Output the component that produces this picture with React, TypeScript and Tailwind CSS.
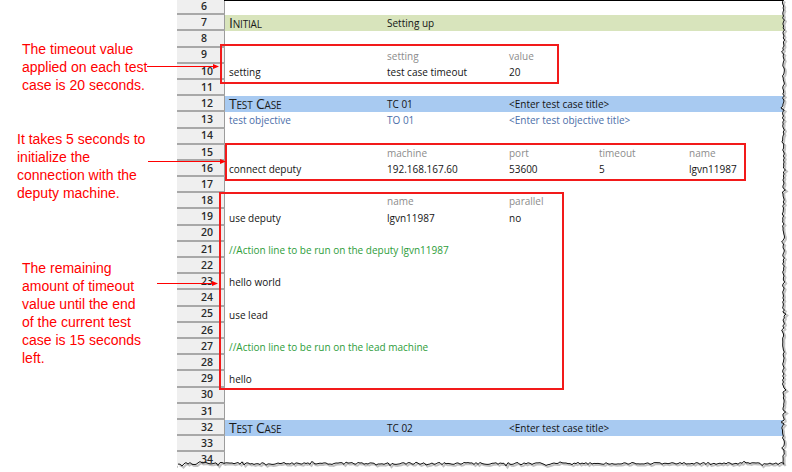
import React from "react";

type CellDef = { t: string; c?: string };
type RowDef = {
  n: number;
  band?: "green" | "blue";
  cells?: (CellDef | null)[];
  title?: string;
};

const G = "text-[#8c8c8c]";
const B = "text-[#4b6ea9]";
const GR = "text-[#2e9d3a]";

const rows: RowDef[] = [
  { n: 6 },
  { n: 7, band: "green", title: "Initial", cells: [null, { t: "Setting up" }] },
  { n: 8 },
  { n: 9, cells: [null, { t: "setting", c: G }, { t: "value", c: G }] },
  { n: 10, cells: [{ t: "setting" }, { t: "test case timeout" }, { t: "20" }] },
  { n: 11 },
  { n: 12, band: "blue", title: "Test Case", cells: [null, { t: "TC 01" }, { t: "<Enter test case title>" }] },
  { n: 13, cells: [{ t: "test objective", c: B }, { t: "TO 01", c: B }, { t: "<Enter test objective title>", c: B }] },
  { n: 14 },
  { n: 15, cells: [null, { t: "machine", c: G }, { t: "port", c: G }, { t: "timeout", c: G }, { t: "name", c: G }] },
  { n: 16, cells: [{ t: "connect deputy" }, { t: "192.168.167.60" }, { t: "53600" }, { t: "5" }, { t: "lgvn11987" }] },
  { n: 17 },
  { n: 18, cells: [null, { t: "name", c: G }, { t: "parallel", c: G }] },
  { n: 19, cells: [{ t: "use deputy" }, { t: "lgvn11987" }, { t: "no" }] },
  { n: 20 },
  { n: 21, cells: [{ t: "//Action line to be run on the deputy lgvn11987", c: GR }] },
  { n: 22 },
  { n: 23, cells: [{ t: "hello world" }] },
  { n: 24 },
  { n: 25, cells: [{ t: "use lead" }] },
  { n: 26 },
  { n: 27, cells: [{ t: "//Action line to be run on the lead machine", c: GR }] },
  { n: 28 },
  { n: 29, cells: [{ t: "hello" }] },
  { n: 30 },
  { n: 31 },
  { n: 32, band: "blue", title: "Test Case", cells: [null, { t: "TC 02" }, { t: "<Enter test case title>" }] },
  { n: 33 },
  { n: 34 },
];

const widths = ["w-[158px]", "w-[122px]", "w-[90px]", "w-[90px]", "w-[90px]"];

function Row({ r }: { r: RowDef }) {
  const bg =
    r.band === "green" ? "bg-[#d8e4bc]" : r.band === "blue" ? "bg-[#a8caf1]" : "bg-transparent";
  return (
    <div className="flex h-[16.2px] shrink-0">
      <div className="w-[48px] shrink-0 bg-[#efefef] border-b-2 border-b-[#a8a8a8] border-r border-r-[#9c9c9c] pl-[24px] flex items-center text-[10.5px] leading-none font-semibold text-[#2a2a2a]">
        {r.n}
      </div>
      <div className={`flex flex-1 items-center ${bg}`}>
        {widths.map((w, i) => {
          const c = r.cells ? r.cells[i] : null;
          if (i === 0 && r.title) {
            return (
              <div key={i} className={`${w} shrink-0 pl-[4px] whitespace-nowrap text-[14px] leading-none text-[#1a1a1a] [font-variant:small-caps] tracking-[-0.2px]`}>
                {r.title}
              </div>
            );
          }
          return (
            <div key={i} className={`${w} shrink-0 pl-[4px] whitespace-nowrap text-[10px] leading-none ${c?.c ?? "text-[#141414]"}`}>
              {c ? c.t : ""}
            </div>
          );
        })}
      </div>
    </div>
  );
}

function rnd(seed: number) {
  let s = seed;
  return () => {
    s = (s * 9301 + 49297) % 233280;
    return s / 233280;
  };
}

function TornEdge() {
  const r = rnd(7);
  const pts: [number, number][] = [];
  for (let y = 0; y <= 462; y += 2) {
    const spike = r() < 0.12 ? (r() - 0.5) * 4 : 0;
    pts.push([783.5 + (r() - 0.5) * 2 + spike, y]);
  }
  for (let x = 784; x >= 177; x -= 2) {
    const spike = r() < 0.12 ? (r() - 0.5) * 4 : 0;
    pts.push([x, 463.5 + (r() - 0.5) * 2 + spike]);
  }
  const line = pts.map((p) => `${p[0].toFixed(1)},${p[1].toFixed(1)}`).join(" ");
  const shadow = pts.map((p) => `${(p[0] + 1.5).toFixed(1)},${(p[1] + 1.5).toFixed(1)}`).join(" ");
  const fill = `${line} 177,472 792,472 792,0`;
  return (
    <svg className="absolute left-0 top-0 pointer-events-none" width={792} height={472}>
      <polygon points={fill} fill="#fff" />
      <polyline points={shadow} fill="none" stroke="#9a9a9a" strokeWidth={2} opacity={0.6} />
      <polyline points={line} fill="none" stroke="#111" strokeWidth={1} />
    </svg>
  );
}

function Arrows() {
  const arrow = (x1: number, x2: number, y: number) => (
    <g key={`${x1}-${y}`}>
      <line x1={x1} y1={y} x2={x2 - 3} y2={y} stroke="#f00" strokeWidth={1} />
      <polygon points={`${x2},${y} ${x2 - 6},${y - 2.5} ${x2 - 6},${y + 2.5}`} fill="#f00" />
    </g>
  );
  return (
    <svg className="absolute left-0 top-0 pointer-events-none" width={792} height={472}>
      {arrow(147, 219, 66.5)}
      {arrow(148, 226, 161.5)}
      {arrow(157, 218, 283.5)}
    </svg>
  );
}

export default function App() {
  return (
    <div className="relative w-[792px] h-[472px] overflow-hidden bg-white font-['Open_Sans',sans-serif]">
      <div className="flex h-full">
        <div className="w-[177px] shrink-0 flex flex-col text-[14px] leading-[18px] text-[#f00] font-['Liberation_Sans',sans-serif]">
          <div className="mt-[40px] pl-[22px]">
            <div>The timeout value</div>
            <div>applied on each test</div>
            <div>case is 20 seconds.</div>
          </div>
          <div className="mt-[36px] pl-[17px]">
            <div>It takes 5 seconds to</div>
            <div>initialize the</div>
            <div>connection with the</div>
            <div>deputy machine.</div>
          </div>
          <div className="mt-[57px] pl-[22px]">
            <div>The remaining</div>
            <div>amount of timeout</div>
            <div>value until the end</div>
            <div>of the current test</div>
            <div>case is 15 seconds</div>
            <div>left.</div>
          </div>
        </div>
        <div className="flex-1 flex flex-col mt-[-1px]">
          {rows.map((r) => (
            <Row key={r.n} r={r} />
          ))}
        </div>
      </div>

      {/* top sheet edge */}
      <div className="absolute left-[224px] top-0 w-[560px] h-px bg-black" />

      {/* red callout boxes */}
      <div className="absolute left-[220px] top-[44px] w-[339px] h-[40px] border-2 border-[#f21a1a]" />
      <div className="absolute left-[225px] top-[143px] w-[521px] h-[38px] border-2 border-[#f21a1a]" />
      <div className="absolute left-[219px] top-[192px] w-[345px] h-[198px] border-2 border-[#f21a1a]" />

      <Arrows />
      <TornEdge />
    </div>
  );
}
